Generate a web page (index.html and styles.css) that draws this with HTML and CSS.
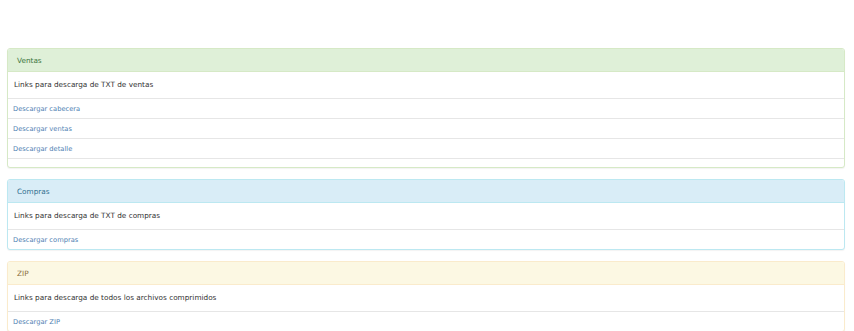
FILE: index.html
```html
<!doctype html>
<html lang="es">
<head>
    <meta charset="UTF-8">
    <title>Descargas</title>
    <link rel="stylesheet" href="styles.css">
</head>
<body>
<div class="container">
    <div class="panel panel-success">
        <div class="panel-heading">Ventas</div>
        <div class="panel-body">Links para descarga de TXT de ventas</div>
        <ul class="list-group">
            <li><a href="#">Descargar cabecera</a></li>
            <li><a href="#">Descargar ventas</a></li>
            <li><a href="#">Descargar detalle</a></li>
            <li class="empty"></li>
        </ul>
    </div>

    <div class="panel panel-info">
        <div class="panel-heading">Compras</div>
        <div class="panel-body">Links para descarga de TXT de compras</div>
        <ul class="list-group">
            <li><a href="#">Descargar compras</a></li>
        </ul>
    </div>

    <div class="panel panel-warning">
        <div class="panel-heading">ZIP</div>
        <div class="panel-body">Links para descarga de todos los archivos comprimidos</div>
        <ul class="list-group">
            <li><a href="#">Descargar ZIP</a></li>
        </ul>
    </div>
</div>
</body>
</html>
```
FILE: styles.css
```css
* {
    margin: 0;
    padding: 0;
    box-sizing: border-box;
}

body {
    font-family: "DejaVu Sans", Verdana, sans-serif;
    font-size: 7.3px;
    color: #333;
    background: #fff;
}

.container {
    padding: 48px 9px 0 7px;
    display: flex;
    flex-direction: column;
    gap: 11px;
}

.panel {
    border: 1px solid #ddd;
    border-radius: 3px;
    background: #fff;
    box-shadow: 0 1px 1px rgba(0, 0, 0, .05);
    overflow: hidden;
}

.panel-heading {
    height: 23px;
    line-height: 23px;
    padding-left: 9px;
    border-bottom: 1px solid transparent;
}

.panel-body {
    height: 26px;
    line-height: 26px;
    padding-left: 6px;
}

.list-group li {
    list-style: none;
    height: 20px;
    padding: 1px 0 0 5px;
    line-height: 18px;
    border-top: 1px solid #e6e6e6;
    font-size: 6.7px;
}

.list-group li.empty {
    height: 9px;
}

.list-group a {
    color: #4f82b3;
    text-decoration: none;
}

.panel-success {
    border-color: #d6e9c6;
}

.panel-success .panel-heading {
    background: #dff0d8;
    color: #3c763d;
    border-color: #d6e9c6;
}

.panel-info {
    border-color: #bce8f1;
}

.panel-info .panel-heading {
    background: #d9edf7;
    color: #31708f;
    border-color: #bce8f1;
}

.panel-warning {
    border-color: #faebcc;
}

.panel-warning .panel-heading {
    background: #fcf8e3;
    color: #8a6d3b;
    border-color: #faebcc;
}
```
